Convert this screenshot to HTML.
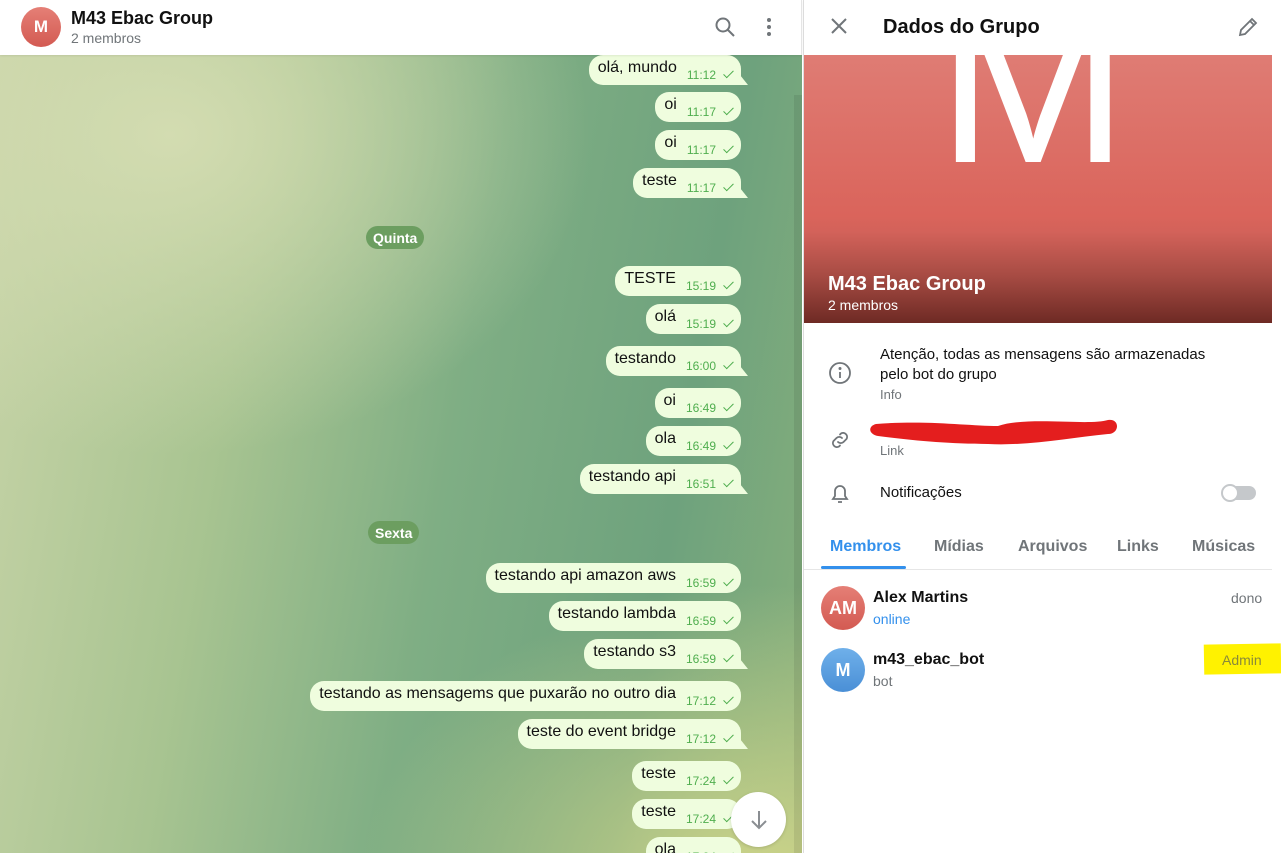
<!DOCTYPE html>
<html><head><meta charset="utf-8"><style>
*{box-sizing:border-box;margin:0;padding:0}
body{width:1281px;height:853px;overflow:hidden;font-family:"Liberation Sans",sans-serif;position:relative;background:#fff}
.chat{position:absolute;left:0;top:55px;width:802px;height:798px;overflow:hidden;
background:radial-gradient(ellipse 420px 320px at 170px 80px,#d3dcb1 0%,rgba(211,220,177,0) 100%),
radial-gradient(ellipse 400px 300px at 760px 830px,#cfd58a 0%,rgba(207,213,138,0) 100%),
linear-gradient(100deg,#c8d4a8 0%,#a8c491 30%,#7fae84 55%,#6ea27d 80%,#88b07c 100%)}
.hdr{position:absolute;left:0;top:0;width:802px;height:55px;background:#fff;border-right:1px solid #e5e5e5;z-index:2;box-shadow:0 1px 2px rgba(0,0,0,.08)}
.av{position:absolute;border-radius:50%;color:#fff;font-weight:bold;display:flex;align-items:center;justify-content:center}
.b{position:absolute;right:61px;height:30px;background:#effdde;border-radius:14px;display:flex;align-items:flex-start;padding:0 8px 0 9px;font-size:16px;color:#111;white-space:nowrap}
.b span.t{padding-top:4px}
.b i{font-style:normal;font-size:12px;color:#4fae4e;margin-left:10px;padding-top:13px;display:flex;align-items:center}
.b i:after{content:"";display:inline-block;width:4px;height:9px;border:solid #4fae4e;border-width:0 1.6px 1.6px 0;transform:rotate(45deg);margin:-4px 2px 0 10px}
.b.tl{border-bottom-right-radius:0}
.b.tl:before{content:"";position:absolute;right:-7px;bottom:0;width:0;height:0;border-left:8px solid #effdde;border-top:10px solid transparent}
.day{position:absolute;height:23px;border-radius:12px;background:#6c9e60;color:#fff;font-weight:bold;font-size:14px;display:flex;align-items:center;padding:0 7px}
.rp{position:absolute;left:803px;top:0;width:478px;height:853px;background:#fff;border-left:1px solid #ddd}
.tab{position:absolute;top:538px;font-size:16px;color:#707579}
</style></head><body>
<div class="hdr">
 <div class="av" style="left:21px;top:7px;width:40px;height:40px;background:linear-gradient(#e57f76,#d35a52);font-size:17px">M</div>
 <div style="position:absolute;left:71px;top:8px;font-size:18px;font-weight:bold;color:#111">M43 Ebac Group</div>
 <div style="position:absolute;left:71px;top:30px;font-size:14px;color:#707579">2 membros</div>
 <svg style="position:absolute;left:714px;top:16px" width="22" height="22" viewBox="0 0 22 22" fill="none" stroke="#707579" stroke-width="2"><circle cx="9" cy="9" r="6.5"/><path d="M14 14l6 6"/></svg>
 <svg style="position:absolute;left:764px;top:17px" width="10" height="20"><circle cx="5" cy="3" r="2" fill="#707579"/><circle cx="5" cy="10" r="2" fill="#707579"/><circle cx="5" cy="17" r="2" fill="#707579"/></svg>
</div>
<div class="chat">
 <div style="position:absolute;right:0;top:40px;width:8px;height:760px;background:rgba(0,0,0,.08)"></div>
</div>
<div style="position:absolute;left:0;top:0;width:802px;height:853px;overflow:hidden">
<div class="b tl" style="top:55px"><span class="t">olá, mundo</span><i>11:12</i></div>
<div class="b" style="top:92px"><span class="t">oi</span><i>11:17</i></div>
<div class="b" style="top:130px"><span class="t">oi</span><i>11:17</i></div>
<div class="b tl" style="top:168px"><span class="t">teste</span><i>11:17</i></div>
<div class="day" style="left:366px;top:226px">Quinta</div>
<div class="b" style="top:266px"><span class="t">TESTE</span><i>15:19</i></div>
<div class="b" style="top:304px"><span class="t">olá</span><i>15:19</i></div>
<div class="b tl" style="top:346px"><span class="t">testando</span><i>16:00</i></div>
<div class="b" style="top:388px"><span class="t">oi</span><i>16:49</i></div>
<div class="b" style="top:426px"><span class="t">ola</span><i>16:49</i></div>
<div class="b tl" style="top:464px"><span class="t">testando api</span><i>16:51</i></div>
<div class="day" style="left:368px;top:521px">Sexta</div>
<div class="b" style="top:563px"><span class="t">testando api amazon aws</span><i>16:59</i></div>
<div class="b" style="top:601px"><span class="t">testando lambda</span><i>16:59</i></div>
<div class="b tl" style="top:639px"><span class="t">testando s3</span><i>16:59</i></div>
<div class="b" style="top:681px"><span class="t">testando as mensagems que puxarão no outro dia</span><i>17:12</i></div>
<div class="b tl" style="top:719px"><span class="t">teste do event bridge</span><i>17:12</i></div>
<div class="b" style="top:761px"><span class="t">teste</span><i>17:24</i></div>
<div class="b" style="top:799px"><span class="t">teste</span><i>17:24</i></div>
<div class="b" style="top:837px"><span class="t">ola</span><i>17:24</i></div>
<div style="position:absolute;left:731px;top:792px;width:55px;height:55px;border-radius:50%;background:#fff;box-shadow:0 1px 3px rgba(0,0,0,.15)"><svg style="position:absolute;left:16px;top:16px" width="24" height="24" viewBox="0 0 24 24" fill="none" stroke="#8a8e92" stroke-width="2"><path d="M12 3v17M5 13l7 7 7-7"/></svg></div>
</div>
<div class="rp">
 <svg style="position:absolute;left:26px;top:17px" width="18" height="18" viewBox="0 0 18 18" stroke="#707579" stroke-width="2"><path d="M2 2l14 14M16 2L2 16"/></svg>
 <div style="position:absolute;left:79px;top:16px;font-size:20px;font-weight:bold;color:#111">Dados do Grupo</div>
 <svg style="position:absolute;left:433px;top:16px" width="22" height="22" viewBox="0 0 22 22" fill="none" stroke="#707579" stroke-width="1.8"><path d="M3 19l1-5L15 3l4 4L8 18z M13 5l4 4"/></svg>
 <div style="position:absolute;left:0;top:55px;width:468px;height:268px;overflow:hidden;background:linear-gradient(#df7c74 0%,#da645b 60%,#d3625a 66%,#a84c44 82%,#6e2a24 100%)">
  <div style="position:absolute;left:133px;top:-87px;font-size:230px;line-height:230px;color:#fff;font-family:'Liberation Sans',sans-serif">M</div>
  <div style="position:absolute;left:24px;top:218px;font-size:20px;font-weight:bold;color:#fff">M43 Ebac Group</div>
  <div style="position:absolute;left:24px;top:242px;font-size:14px;color:#fff">2 membros</div>
 </div>
 <svg style="position:absolute;left:24px;top:361px" width="24" height="24" viewBox="0 0 24 24" fill="none" stroke="#707579" stroke-width="1.8"><circle cx="12" cy="12" r="10"/><path d="M12 11v6"/><circle cx="12" cy="7.5" r="0.6" fill="#707579"/></svg>
 <div style="position:absolute;left:76px;top:345px;font-size:15px;line-height:20px;color:#111">Atenção, todas as mensagens são armazenadas<br>pelo bot do grupo</div>
 <div style="position:absolute;left:76px;top:387px;font-size:13px;color:#707579">Info</div>
 <svg style="position:absolute;left:24px;top:428px" width="24" height="24" viewBox="0 0 24 24" fill="none" stroke="#707579" stroke-width="1.8" stroke-linecap="round"><path d="M10 14a4 4 0 0 0 5.5 0l3-3a4 4 0 0 0-5.5-5.5l-1 1M14 10a4 4 0 0 0-5.5 0l-3 3a4 4 0 0 0 5.5 5.5l1-1"/></svg>
 <svg style="position:absolute;left:64px;top:414px" width="250" height="36"><path d="M8 10 C60 6 100 12 130 12 C160 2 220 12 240 6 C252 4 252 20 240 20 C200 24 160 32 120 30 C80 30 40 26 10 22 C0 20 0 12 8 10Z" fill="#e41e1e"/></svg>
 <div style="position:absolute;left:76px;top:443px;font-size:13px;color:#707579">Link</div>
 <svg style="position:absolute;left:24px;top:481px" width="24" height="24" viewBox="0 0 24 24" fill="none" stroke="#707579" stroke-width="1.8"><path d="M5 18h14l-2-3V10a5 5 0 0 0-10 0v5z M10 21h4"/></svg>
 <div style="position:absolute;left:76px;top:484px;font-size:15px;color:#111">Notificações</div>
 <div style="position:absolute;left:418px;top:486px;width:34px;height:14px;border-radius:7px;background:#c5c8cb"></div>
 <div style="position:absolute;left:417px;top:484px;width:18px;height:18px;border-radius:50%;background:#fff;border:2px solid #c5c8cb"></div>
 <div class="tab" style="left:26px;color:#3390ec;font-weight:bold">Membros</div>
 <div style="position:absolute;left:17px;top:566px;width:85px;height:3px;background:#3390ec;border-radius:2px"></div>
 <div class="tab" style="left:130px;font-weight:bold">Mídias</div>
 <div class="tab" style="left:214px;font-weight:bold">Arquivos</div>
 <div class="tab" style="left:313px;font-weight:bold">Links</div>
 <div class="tab" style="left:388px;font-weight:bold">Músicas</div>
 <div style="position:absolute;left:0;top:569px;width:468px;height:1px;background:#e6e6e6"></div>
 <div class="av" style="left:17px;top:586px;width:44px;height:44px;background:linear-gradient(#e57f76,#d35a52);font-size:18px">AM</div>
 <div style="position:absolute;left:69px;top:589px;font-size:16px;font-weight:bold;color:#111">Alex Martins</div>
 <div style="position:absolute;left:69px;top:611px;font-size:14px;color:#3390ec">online</div>
 <div style="position:absolute;left:427px;top:590px;font-size:14px;color:#707579">dono</div>
 <div class="av" style="left:17px;top:648px;width:44px;height:44px;background:linear-gradient(#6fb0ea,#4a8fd6);font-size:18px">M</div>
 <div style="position:absolute;left:69px;top:651px;font-size:16px;font-weight:bold;color:#111">m43_ebac_bot</div>
 <div style="position:absolute;left:69px;top:673px;font-size:14px;color:#707579">bot</div>
 <div style="position:absolute;left:400px;top:644px;width:77px;height:30px;background:#fff200;transform:rotate(-1deg)"></div>
 <div style="position:absolute;left:418px;top:652px;font-size:14px;color:#8a8a3a">Admin</div>
</div>
</body></html>
